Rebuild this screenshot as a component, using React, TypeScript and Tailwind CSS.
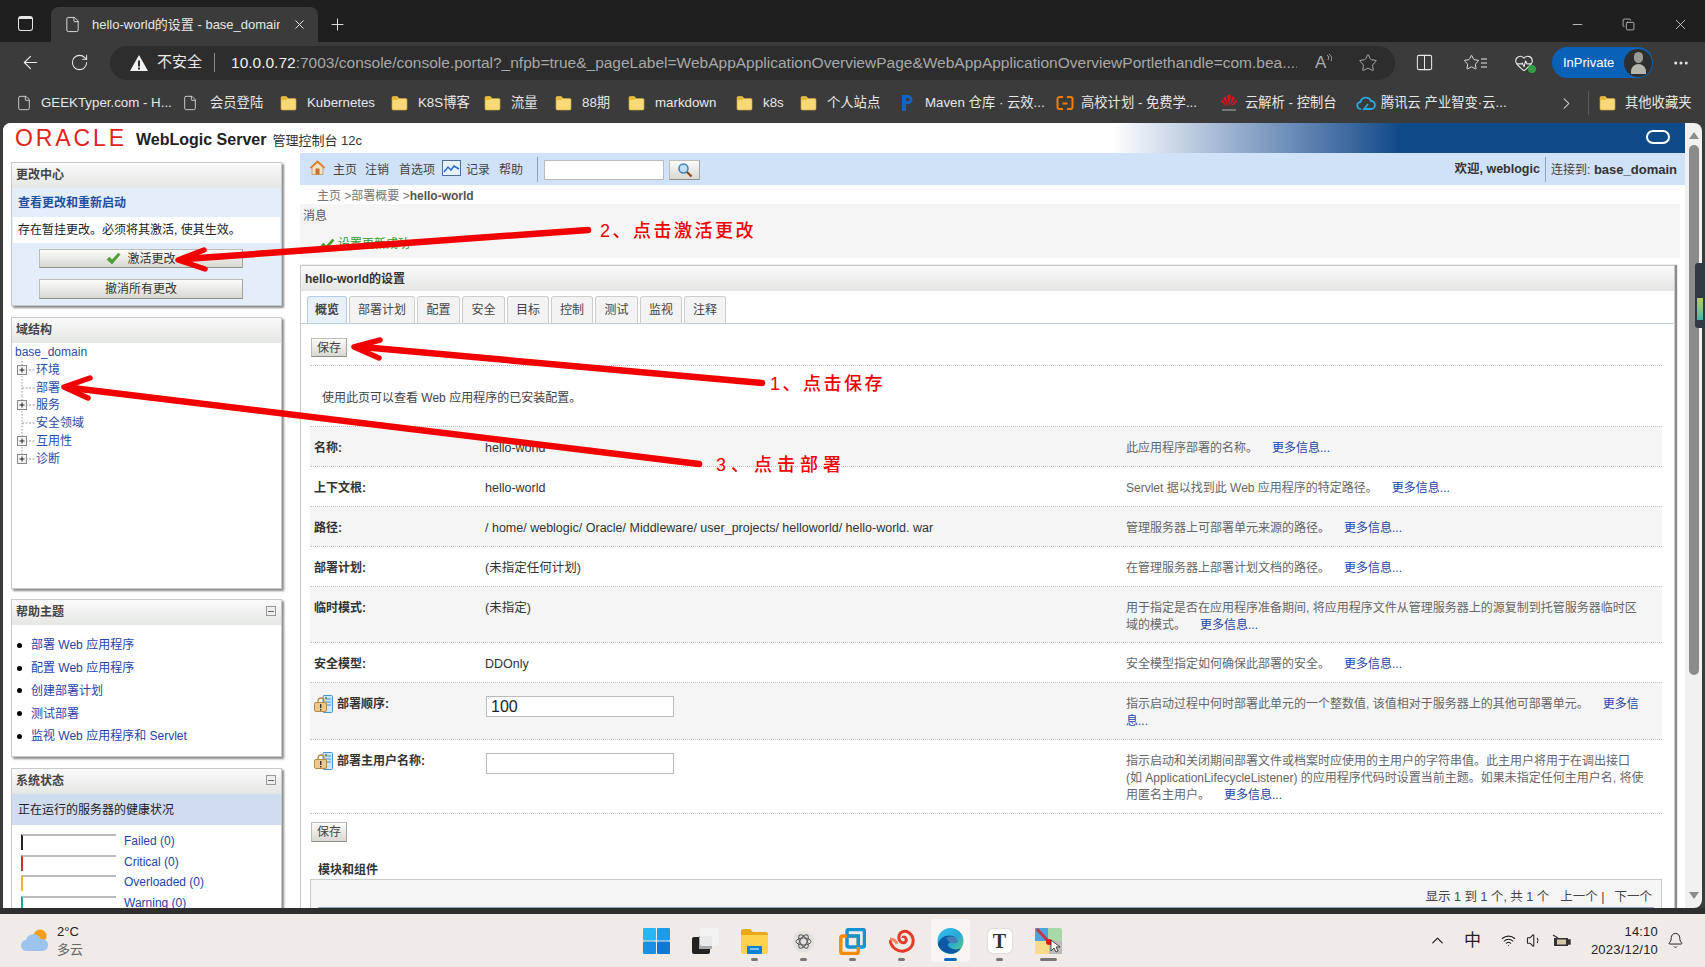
import { FC, ReactNode } from 'react';
import {
  ArrowLeft,
  Bell,
  ChevronRight,
  ChevronUp,
  Columns2,
  Copy,
  Ellipsis,
  File,
  HeartPulse,
  Minus,
  Plus,
  RotateCw,
  Star,
  Volume1,
  Wifi,
  X,
} from 'lucide-react';

const FONT = 'font-["Liberation_Sans","Noto_Sans_CJK_SC",sans-serif]';
const LINK = 'text-[#2444a8]';
const BTN = 'bg-gradient-to-b from-[#fbfbf9] to-[#d9d9d3] border border-[#bdbdb8] border-b-[#8f8f8a] border-r-[#a5a5a0]';

/* ---------- small drawings ---------- */

const FolderIcon: FC = () => (
  <svg width="17" height="16" viewBox="0 0 17 16" className="shrink-0">
    <path d="M1 3c0-1 .6-1.5 1.5-1.5h3.7L8 3.5h6.5c1 0 1.5.5 1.5 1.5v8.500c0 1-.5 1.500-1.500 1.500h-12C1.500 15 1 14.500 1 13.500z" fill="#f8d978" stroke="#c9a33c" strokeWidth=".7" />
    <path d="M1 3c0-1 .6-1.500 1.500-1.500h3.700L8 3.500 6 5H1z" fill="#e8b93e" />
  </svg>
);

const BookmarkFolder: FC = () => (
  <span className="ml-[1px] mr-[10px]">
    <FolderIcon />
  </span>
);

const MavenIcon: FC = () => (
  <svg width="14" height="18" viewBox="0 0 14 18" className="shrink-0">
    <path d="M2 1h6a4.500 4.500 0 0 1 0 9H6v7H2z" fill="#1565c0" />
    <path d="M6 4h2a1.500 1.500 0 0 1 0 3H6z" fill="#3b3b3b" />
  </svg>
);

const BracketIcon: FC = () => (
  <svg width="18" height="16" viewBox="0 0 18 16" className="mr-[3px] shrink-0">
    <path d="M7 2H3.500A2 2 0 0 0 1.500 4v8a2 2 0 0 0 2 2H7M11 2h3.500a2 2 0 0 1 2 2v8a2 2 0 0 1-2 2H11M6.500 8.500h5" fill="none" stroke="#f57c00" strokeWidth="2" />
  </svg>
);

const HuaweiIcon: FC = () => (
  <svg width="18" height="20" viewBox="0 0 18 20" className="shrink-0">
    <g fill="#d8141c">
      <path d="M9 13 7 3c1-1 2-2 2-2s1 1 2 2z" />
      <path d="M8 13 3 5l3-2z" />
      <path d="M10 13l5-8-3-2z" />
      <path d="M7.500 14 1 9l1-3z" />
      <path d="M10.500 14 17 9l-1-3z" />
    </g>
    <rect x="2" y="16" width="14" height="2" fill="#777" />
  </svg>
);

const CloudIcon: FC = () => (
  <svg width="20" height="16" viewBox="0 0 20 16" className="shrink-0" fill="none">
    <path d="M5 14a3.500 3.500 0 0 1-.5-7A5.500 5.500 0 0 1 15 6a4 4 0 0 1 0 8H8l4-5" stroke="#29a9e1" strokeWidth="1.800" />
  </svg>
);

const HomeIcon: FC = () => (
  <svg width="17" height="17" viewBox="0 0 17 17" className="-mt-[5px] shrink-0">
    <path d="M3 8v7.500h11V8L8.500 3z" fill="#f4e2c0" stroke="#b5793a" strokeWidth=".6" />
    <path d="M.8 8.500 8.500 1.200l7.700 7.300-1.300 1L8.500 3.700 2.100 9.500z" fill="#e2792a" />
    <rect x="6.500" y="9.500" width="4" height="6" fill="#c9702c" />
  </svg>
);

const ChartIcon: FC = () => (
  <svg width="19" height="16" viewBox="0 0 19 16" className="-mt-[3px] shrink-0">
    <rect x=".5" y=".5" width="18" height="15" fill="#e8f0fa" stroke="#4a6f9c" />
    <path d="M2 12 6 7l3 3 3-4 5 3" fill="none" stroke="#2b6be0" strokeWidth="1.500" />
  </svg>
);

const SearchIcon: FC = () => (
  <svg width="16" height="16" viewBox="0 0 16 16">
    <circle cx="6.500" cy="6.500" r="4.500" fill="#bfe0f7" stroke="#3f7fb5" strokeWidth="1.500" />
    <path d="m10 10 4.500 4.500" stroke="#8a4a22" strokeWidth="2.200" />
  </svg>
);

const CheckIcon: FC = () => (
  <svg width="15" height="13" viewBox="0 0 15 13" className="shrink-0">
    <path d="M1 7.500 3.500 5l2.500 3L12.500 1 14 2.500 6 12z" fill="#4aa52e" stroke="#2f7d1d" strokeWidth=".5" />
  </svg>
);

const LockDocIcon: FC = () => (
  <svg width="19" height="18" viewBox="0 0 19 18" className="shrink-0">
    <rect x="9" y=".5" width="9.500" height="17" rx="1" fill="#cfe4f6" stroke="#4c92cf" />
    <path d="M11 4h6M11 7h6M11 10h6" stroke="#4c92cf" />
    <rect x="11" y="2" width="2" height="2" fill="#5aa55a" />
    <path d="M4 8V6a3 3 0 0 1 6 0v2" fill="none" stroke="#b98a45" strokeWidth="1.300" />
    <rect x=".5" y="7.500" width="12" height="9" rx="1.500" fill="#efc987" stroke="#b98a45" />
    <rect x="6" y="9" width="1.400" height="4" fill="#333" />
    <rect x="6" y="14" width="1.400" height="1.400" fill="#333" />
  </svg>
);

const TreeConnector: FC<{ box?: boolean; last?: boolean }> = ({ box, last }) => (
  <svg width="21" height="18" viewBox="0 0 21 18" className="shrink-0">
    <path d={last ? 'M7 0v9' : 'M7 0v18'} stroke="#999" strokeDasharray="1.500 1.500" />
    <path d="M7 9h13" stroke="#999" strokeDasharray="2 1.500" />
    {box && (
      <>
        <rect x="2.500" y="4.500" width="9" height="9" fill="#f4f4f4" stroke="#888" />
        <path d="M4.500 9h5M7 6.500v5" stroke="#222" />
      </>
    )}
  </svg>
);

const CollapseBox: FC = () => (
  <span className="-mt-[2px] flex h-[10px] w-[10px] items-center justify-center border border-[#999] bg-[#eee]">
    <span className="h-px w-[6px] bg-[#666]" />
  </span>
);

/* ---------- browser chrome ---------- */

const TabStrip: FC = () => (
  <div className="flex h-[42px] items-end bg-[#1f1f1f] text-[#e6e6e6]">
    <div className="flex h-[35px] w-[51px] items-center justify-center pb-[3px]">
      <span className="h-[15px] w-[15px] rounded-[3px] border border-[#e6e6e6] border-t-[3px]" />
    </div>
    <div className="flex h-[35px] w-[267px] items-center rounded-t-lg bg-[#3b3b3b] pl-[13px]">
      <File size={17} strokeWidth={1.3} className="shrink-0" />
      <span className="ml-[11px] w-[188px] overflow-hidden whitespace-nowrap text-[13px]">hello-world的设置 - base_domain</span>
      <X size={15} strokeWidth={1.6} className="ml-[12px]" />
    </div>
    <div className="flex h-[35px] w-[38px] items-center justify-center">
      <Plus size={19} strokeWidth={1.2} />
    </div>
    <div className="ml-auto flex h-[35px] items-center pr-[16px]">
      <Minus size={15} strokeWidth={1.2} className="mr-[37px]" />
      <Copy size={13} strokeWidth={1.3} className="mr-[37px]" />
      <X size={17} strokeWidth={1.1} />
    </div>
  </div>
);

const Toolbar: FC = () => (
  <div className="flex h-[41px] items-center bg-[#3b3b3b] text-[#e8e8e8]">
    <div className="flex w-[60px] justify-center">
      <ArrowLeft size={21} strokeWidth={1.3} />
    </div>
    <div className="flex w-[39px] justify-center">
      <RotateCw size={19} strokeWidth={1.3} />
    </div>
    <div className="ml-[11px] flex h-[34px] w-[1285px] items-center rounded-[17px] bg-[#2d2d2d] pl-[20px]">
      <svg width="18" height="16" viewBox="0 0 18 16" className="shrink-0">
        <path d="M9 0 18 16H0z" fill="#f2f2f2" />
        <rect x="8" y="5.500" width="2" height="6" fill="#2d2d2d" />
        <rect x="8" y="12.500" width="2" height="2" fill="#2d2d2d" />
      </svg>
      <span className="ml-[9px] text-[15px]">不安全</span>
      <span className="ml-[12px] h-[19px] w-px bg-[#8a8a8a]" />
      <span className="ml-[16px] w-[1066px] overflow-hidden whitespace-nowrap text-[15.500px] text-[#a8a8a8]">
        <span className="text-[#f0f0f0]">10.0.0.72</span>:7003/console/console.portal?_nfpb=true&amp;_pageLabel=WebAppApplicationOverviewPage&amp;WebAppApplicationOverviewPortlethandle=com.bea....
      </span>
      <span className="ml-[18px] text-[17px] text-[#aaa]">A</span>
      <svg width="6" height="10" viewBox="0 0 6 10" className="mb-[8px]" fill="none" stroke="#aaa">
        <path d="M1 1c2 1 2 3 1 5M3 0c3 2 3 5 2 7" />
      </svg>
      <Star size={20} strokeWidth={1.2} className="ml-[26px] text-[#aaa]" />
    </div>
    <Columns2 size={19} strokeWidth={1.3} className="ml-[20px]" />
    <div className="ml-[29px] flex items-center">
      <Star size={17} strokeWidth={1.3} />
      <svg width="7" height="12" viewBox="0 0 7 12" stroke="#e8e8e8">
        <path d="M1 2h6M1 6h6M1 10h6" />
      </svg>
    </div>
    <div className="relative ml-[27px]">
      <HeartPulse size={20} strokeWidth={1.3} />
      <span className="absolute bottom-0 right-[-2px] h-[8px] w-[8px] rounded-full bg-[#2f9e44]" />
    </div>
    <div className="ml-[18px] flex h-[31px] w-[101px] items-center rounded-full bg-[#0a62b8] pl-[11px] text-[13px] text-white">
      InPrivate
      <span className="ml-auto mr-[1px] flex h-[28px] w-[28px] flex-col items-center justify-center gap-[1px] rounded-full bg-[#2e2e2e]">
        <span className="h-[11px] w-[9px] rounded-full bg-[#9a9a94]" />
        <span className="h-[10px] w-[15px] rounded-t-full bg-[#b5b5ad]" />
      </span>
    </div>
    <Ellipsis size={18} className="ml-[19px]" />
  </div>
);

const bookmarks: { icon: ReactNode; label: string; width: string }[] = [
  { icon: <File size={16} strokeWidth={1.2} />, label: 'GEEKTyper.com - H...', width: 'w-[166px]' },
  { icon: <File size={16} strokeWidth={1.2} className="mr-[12px]" />, label: '会员登陆', width: 'w-[97px]' },
  { icon: <BookmarkFolder />, label: 'Kubernetes', width: 'w-[111px]' },
  { icon: <BookmarkFolder />, label: 'K8S博客', width: 'w-[93px]' },
  { icon: <BookmarkFolder />, label: '流量', width: 'w-[71px]' },
  { icon: <BookmarkFolder />, label: '88期', width: 'w-[73px]' },
  { icon: <BookmarkFolder />, label: 'markdown', width: 'w-[108px]' },
  { icon: <BookmarkFolder />, label: 'k8s', width: 'w-[64px]' },
  { icon: <BookmarkFolder />, label: '个人站点', width: 'w-[101px]' },
  { icon: <MavenIcon />, label: 'Maven 仓库 · 云效...', width: 'w-[156px]' },
  { icon: <BracketIcon />, label: '高校计划 - 免费学...', width: 'w-[164px]' },
  { icon: <HuaweiIcon />, label: '云解析 - 控制台', width: 'w-[136px]' },
  { icon: <CloudIcon />, label: '腾讯云 产业智变·云...', width: 'w-[200px]' },
];

const BookmarkBar: FC = () => (
  <div className="flex h-[40px] items-center bg-[#3b3b3b] pl-[16px] text-[13.300px] text-[#e8e8e8]">
    {bookmarks.map((item) => (
      <div key={item.label} className={`${item.width} flex shrink-0 items-center whitespace-nowrap`}>
        <span className="flex min-w-[25px] shrink-0">{item.icon}</span>
        {item.label}
      </div>
    ))}
    <ChevronRight size={19} strokeWidth={1.3} className="ml-[1px]" />
    <span className="ml-[12px] h-[24px] w-px bg-[#5a5a5a]" />
    <span className="ml-[10px] flex items-center gap-[9px] whitespace-nowrap">
      <FolderIcon />
      其他收藏夹
    </span>
  </div>
);

/* ---------- console, left column ---------- */

const Panel: FC<{ title: string; collapse?: boolean; className: string; children: ReactNode }> = ({ title, collapse, className, children }) => (
  <section className={`${className} w-[271px] shrink-0 border border-[#c9c9c9] bg-white shadow-[2px_2px_2px_#8c8c8c]`}>
    <div className="flex h-[25px] items-center justify-between bg-gradient-to-b from-[#fafafa] to-[#e5e7e4] pb-[1px] pl-[4px] pr-[5px] text-[12px] font-bold text-[#444]">
      {title}
      {collapse && <CollapseBox />}
    </div>
    {children}
  </section>
);

const tree = [
  { label: '环境', box: true },
  { label: '部署' },
  { label: '服务', box: true },
  { label: '安全领域' },
  { label: '互用性', box: true },
  { label: '诊断', box: true, last: true },
];

const helpTopics = ['部署 Web 应用程序', '配置 Web 应用程序', '创建部署计划', '测试部署', '监视 Web 应用程序和 Servlet'];

const health = [
  { label: 'Failed (0)', bar: 'border-l-[#222]' },
  { label: 'Critical (0)', bar: 'border-l-[#d32f2f]' },
  { label: 'Overloaded (0)', bar: 'border-l-[#e5b53a]' },
  { label: 'Warning (0)', bar: 'border-l-[#2a9d9d]' },
];

const LeftColumn: FC = () => (
  <aside className="flex w-[297px] shrink-0 flex-col pl-[8px] pt-[9px]">
    <Panel title="更改中心" className="h-[144px] bg-[#e4edfa]">
      <div className="flex h-[29px] items-center bg-[#e4edfa] pl-[6px] text-[12px] font-bold text-[#1f4fa0]">查看更改和重新启动</div>
      <div className="h-[88px] bg-[#e4edfa]">
        <div className="mx-[1px] flex h-[26px] items-center bg-white pl-[5px] text-[12px] text-[#222]">存在暂挂更改。必须将其激活, 使其生效。</div>
        <div className={`${BTN} ml-[27px] mt-[6px] flex h-[19px] w-[204px] items-center justify-center gap-[6px] text-[12px] text-[#333]`}>
          <CheckIcon />
          激活更改
        </div>
        <div className={`${BTN} ml-[27px] mt-[11px] flex h-[20px] w-[204px] items-center justify-center text-[12px] text-[#333]`}>撤消所有更改</div>
      </div>
    </Panel>
    <Panel title="域结构" className="mt-[11px] h-[272px]">
      <div className="pl-[3px] text-[12px] text-[#2b4ba8]">
        <div className="flex h-[18px] items-center">base_domain</div>
        {tree.map((node) => (
          <div key={node.label} className="flex h-[17.750px] items-center">
            <TreeConnector box={node.box} last={node.last} />
            {node.label}
          </div>
        ))}
      </div>
    </Panel>
    <Panel title="帮助主题" collapse className="mt-[10px] h-[158px]">
      <ul className="pl-[5px] pt-[9px] text-[12px]">
        {helpTopics.map((topic) => (
          <li key={topic} className="flex h-[22.750px] items-center">
            <span className="h-[5px] w-[5px] rounded-full bg-black" />
            <span className={`ml-[9px] ${LINK}`}>{topic}</span>
          </li>
        ))}
      </ul>
    </Panel>
    <Panel title="系统状态" collapse className="mt-[11px] h-[180px]">
      <div className="flex h-[31px] items-center bg-[#d0dcef] pl-[6px] text-[12px] text-[#222]">正在运行的服务器的健康状况</div>
      <div className="pl-[9px] pt-[9px]">
        {health.map((row) => (
          <div key={row.label} className="flex h-[20.500px] items-start">
            <span className={`${row.bar} h-[16px] w-[95px] border-l-2 border-t-2 border-t-[#bbb]`} />
            <span className={`ml-[8px] text-[12px] leading-[15px] ${LINK}`}>{row.label}</span>
          </div>
        ))}
      </div>
    </Panel>
  </aside>
);

/* ---------- console, right column ---------- */

const tabs = [
  { name: '概览', width: 'w-[40px]', active: true },
  { name: '部署计划', width: 'w-[66px]' },
  { name: '配置', width: 'w-[43px]' },
  { name: '安全', width: 'w-[43px]' },
  { name: '目标', width: 'w-[42px]' },
  { name: '控制', width: 'w-[42px]' },
  { name: '测试', width: 'w-[43px]' },
  { name: '监视', width: 'w-[42px]' },
  { name: '注释', width: 'w-[42px]' },
];

interface SettingRow {
  label: string;
  value?: string;
  input?: string;
  lock?: boolean;
  desc: string;
  link?: string;
  height: string;
}

const rows: SettingRow[] = [
  { label: '名称:', value: 'hello-world', desc: '此应用程序部署的名称。', height: 'h-[40px]' },
  { label: '上下文根:', value: 'hello-world', desc: 'Servlet 据以找到此 Web 应用程序的特定路径。', height: 'h-[40px]' },
  { label: '路径:', value: '/ home/ weblogic/ Oracle/ Middleware/ user_projects/ helloworld/ hello-world. war', desc: '管理服务器上可部署单元来源的路径。', height: 'h-[40px]' },
  { label: '部署计划:', value: '(未指定任何计划)', desc: '在管理服务器上部署计划文档的路径。', height: 'h-[40px]' },
  { label: '临时模式:', value: '(未指定)', desc: '用于指定是否在应用程序准备期间, 将应用程序文件从管理服务器上的源复制到托管服务器临时区\n域的模式。', height: 'h-[56px]' },
  { label: '安全模型:', value: 'DDOnly', desc: '安全模型指定如何确保此部署的安全。', height: 'h-[40px]' },
  { label: '部署顺序:', input: '100', lock: true, desc: '指示启动过程中何时部署此单元的一个整数值, 该值相对于服务器上的其他可部署单元。', link: '更多信\n息...', height: 'h-[57px]' },
  { label: '部署主用户名称:', input: '', lock: true, desc: '指示启动和关闭期间部署文件或档案时应使用的主用户的字符串值。此主用户将用于在调出接口\n(如 ApplicationLifecycleListener) 的应用程序代码时设置当前主题。如果未指定任何主用户名, 将使\n用匿名主用户。', height: 'h-[74px]' },
];

const TopBar: FC = () => (
  <div className="flex h-[32px] items-center bg-[#d0e2f7] pl-[9px] pr-[8px] pt-[1px] text-[12px] text-[#444]">
    <HomeIcon />
    <span className="ml-[7px]">主页</span>
    <span className="ml-[8px]">注销</span>
    <span className="ml-[10px]">首选项</span>
    <span className="ml-[7px]">
      <ChartIcon />
    </span>
    <span className="ml-[5px]">记录</span>
    <span className="ml-[9px]">帮助</span>
    <span className="ml-[14px] h-[25px] w-px bg-[#8ea3b8]" />
    <input readOnly className="ml-[6px] h-[20px] w-[120px] border border-[#bbb] bg-white" />
    <span className={`${BTN} ml-[5px] flex h-[20px] w-[31px] items-center justify-center`}>
      <SearchIcon />
    </span>
    <span className="ml-auto text-[12.500px] font-bold text-[#333]">欢迎, weblogic</span>
    <span className="mx-[5px] h-[25px] w-px bg-[#8ea3b8]" />
    <span className="text-[13px] text-[#444]">
      <span className="text-[12px]">连接到:</span> <b className="text-[#333]">base_domain</b>
    </span>
  </div>
);

const SettingsRow: FC<{ row: SettingRow; index: number }> = ({ row, index }) => (
  <div className={`${row.height} ${index % 2 === 0 ? 'bg-[#f5f5f5]' : 'bg-white'} flex border-t border-dotted border-[#c4c4c4] pt-[13px] text-[12px] leading-[17px]`}>
    <div className="flex w-[175px] shrink-0 items-start pl-[4px] font-bold text-[#333]">
      {row.lock && (
        <span className="-mt-[1px] mr-[4px]">
          <LockDocIcon />
        </span>
      )}
      {row.label}
    </div>
    <div className="w-[641px] shrink-0 text-[12.500px] text-[#333]">
      {row.value}
      {row.input !== undefined && (
        <input
          readOnly
          value={row.input}
          className="ml-[1px] block h-[21px] w-[188px] border border-[#bbb] bg-white pl-[4px] text-[16px] text-[#222]"
        />
      )}
    </div>
    <div className="w-[532px] shrink-0 whitespace-pre-line text-[#666]">
      {row.desc}
      <a className={`ml-[14px] ${LINK}`}>{row.link ?? '更多信息...'}</a>
    </div>
  </div>
);

const RightColumn: FC = () => (
  <div className="w-[1385px] shrink-0">
    <TopBar />
    <div className="flex h-[19px] items-center pl-[17px] pt-[2px] text-[12px] text-[#777]">
      主页 &gt;部署概要 &gt;<b className="text-[#555]">hello-world</b>
    </div>
    <div className="mr-[5px] h-[54px] bg-[#f5f5f5] pl-[3px] pt-[3px] text-[12px] text-[#555]">
      消息
      <div className="ml-[17px] mt-[10px] flex items-center gap-[3px] text-[#2e9a2e]">
        <CheckIcon />
        设置更新成功
      </div>
    </div>
    <section className="ml-0 mt-[7px] h-[700px] w-[1375px] border border-[#c9c9c9] shadow-[2px_0_1px_#8c8c8c]">
      <div className="flex h-[25px] items-center bg-gradient-to-b from-[#fafafa] to-[#e5e7e4] pl-[4px] text-[12px] font-bold text-[#333]">hello-world的设置</div>
      <div className="flex h-[33px] items-end gap-[2px] border-b border-[#b9cfe2] pl-[6px] text-[12px] text-[#444]">
        {tabs.map((tab) => (
          <div
            key={tab.name}
            className={`${tab.width} flex h-[27px] items-center justify-center rounded-t-[3px] border border-b-0 ${
              tab.active ? 'border-[#b4cce4] bg-[#e9f0f8] font-bold' : 'border-[#cdcdcd] bg-[#f3f3f3]'
            }`}
          >
            {tab.name}
          </div>
        ))}
      </div>
      <div className="pl-[9px] pr-[12px]">
        <div className="mt-[14px] pl-[1px]">
          <div className={`${BTN} flex h-[19px] w-[36px] items-center justify-center text-[12px] text-[#444]`}>保存</div>
        </div>
        <div className="mt-[8px] h-[61px] border-t border-dotted border-[#c4c4c4] pl-[12px] pt-[24px] text-[12px] leading-[17px] text-[#444]">
          使用此页可以查看 Web 应用程序的已安装配置。
        </div>
        {rows.map((row, index) => (
          <SettingsRow key={row.label} row={row} index={index} />
        ))}
        <div className="border-t border-dotted border-[#c4c4c4] pl-[1px] pt-[8px]">
          <div className={`${BTN} flex h-[20px] w-[36px] items-center justify-center text-[12px] text-[#444]`}>保存</div>
        </div>
        <div className="mt-[20px] pl-[8px] text-[12px] font-bold leading-[17px] text-[#333]">模块和组件</div>
        <div className="flex h-[60px] flex-col border border-[#ccc] bg-[#f5f5f5] px-[7px] pt-[9px] text-[12.500px] leading-[17px] text-[#444]">
          <div className="flex justify-end pr-[2px]">
            显示 1 到 1 个, 共 1 个<span className="ml-[11px]">上一个 |</span>
            <span className="ml-[10px]">下一个</span>
          </div>
          <div className="mt-[1px] h-[4px] border-t border-[#8fa8c4] bg-[#dfe7f1]" />
        </div>
      </div>
    </section>
  </div>
);

const Scrollbar: FC = () => (
  <div className="flex w-[17px] flex-col items-center rounded-r-lg bg-[#f1f1f1] pt-[9px]">
    <span className="h-0 w-0 border-x-[5px] border-b-[7px] border-x-transparent border-b-[#8b8b8b]" />
    <span className="mt-[6px] h-[530px] w-[10px] rounded-full bg-[#8b8b8b]" />
    <span className="mt-auto mb-[9px] h-0 w-0 border-x-[5px] border-t-[7px] border-x-transparent border-t-[#8b8b8b]" />
  </div>
);

/* ---------- taskbar ---------- */

const taskbarApps: { icon: ReactNode; dot?: string; active?: boolean }[] = [
  {
    icon: (
      <svg width="27" height="26" viewBox="0 0 27 26">
        <rect x="0" y="0" width="13" height="12.500" rx="1" fill="#29b6f6" />
        <rect x="14" y="0" width="13" height="12.500" rx="1" fill="#1e9be8" />
        <rect x="0" y="13.500" width="13" height="12.500" rx="1" fill="#1a8fe3" />
        <rect x="14" y="13.500" width="13" height="12.500" rx="1" fill="#0f78d4" />
      </svg>
    ),
  },
  {
    icon: (
      <svg width="27" height="26" viewBox="0 0 27 26">
        <rect x="0" y="9" width="18" height="17" rx="2" fill="#222" />
        <rect x="7" y="8" width="13" height="13" fill="#aaa" />
        <rect x="8" y="0" width="19" height="18" rx="2" fill="#f5f5f5" fillOpacity=".85" />
      </svg>
    ),
  },
  {
    dot: 'w-[7px] bg-[#777]',
    icon: (
      <svg width="27" height="25" viewBox="0 0 27 25">
        <path d="M0 2c0-1 1-2 2-2h7l3 3h13c1 0 2 1 2 2v4H0z" fill="#e8a818" />
        <path d="M0 6h27v17c0 1-1 2-2 2H2c-1 0-2-1-2-2z" fill="#fcd34d" />
        <rect x="6" y="17" width="15" height="8" rx="1" fill="#0f7fd6" />
        <rect x="9" y="19" width="9" height="2" fill="#7cc4f5" />
      </svg>
    ),
  },
  {
    dot: 'w-[7px] bg-[#777]',
    icon: (
      <svg width="23" height="23" viewBox="0 0 23 23" fill="none">
        <circle cx="11.500" cy="11.500" r="11" fill="#e4e2df" />
        <g stroke="#555" strokeWidth="1">
          <ellipse cx="11.500" cy="11.500" rx="7.500" ry="3.500" />
          <ellipse cx="11.500" cy="11.500" rx="7.500" ry="3.500" transform="rotate(60 11.500 11.500)" />
          <ellipse cx="11.500" cy="11.500" rx="7.500" ry="3.500" transform="rotate(120 11.500 11.500)" />
        </g>
      </svg>
    ),
  },
  {
    dot: 'w-[7px] bg-[#777]',
    icon: (
      <svg width="27" height="27" viewBox="0 0 27 27" fill="none">
        <rect x="8" y="1.500" width="17.500" height="17.500" rx="2" stroke="#1293d2" strokeWidth="3.500" />
        <rect x="1.800" y="8" width="17.500" height="17.500" rx="2" stroke="#f58a0b" strokeWidth="3.500" />
        <path d="M8 8h11.300v11" stroke="#1293d2" strokeWidth="3.500" />
      </svg>
    ),
  },
  {
    dot: 'w-[7px] bg-[#777]',
    icon: (
      <svg width="26" height="26" viewBox="0 0 26 26" fill="none">
        <path d="M1 12c1 8 8 12 14 11 6-1 10-6 9-12S17 2 13 4s-4 8-1 10 6 0 5-3-3-2-3-1" stroke="#e8392b" strokeWidth="3" />
        <path d="M1 11c4 0 6 2 7 5" stroke="#f08a5d" strokeWidth="3" />
      </svg>
    ),
  },
  {
    active: true,
    dot: 'w-[13px] bg-[#0f6cbd]',
    icon: (
      <svg width="27" height="26" viewBox="0 0 27 26">
        <defs>
          <linearGradient id="edge" x1="0" y1="0" x2="1" y2="1">
            <stop offset="0" stopColor="#35c1f1" />
            <stop offset=".55" stopColor="#27a8d8" />
            <stop offset="1" stopColor="#66d36e" />
          </linearGradient>
        </defs>
        <circle cx="13.500" cy="13" r="13" fill="url(#edge)" />
        <path d="M1 16C3 8 13 5 19 10c2 2 2 5 0 5h-6c-2 0-3 2-1 4 3 3 9 3 12 1-3 5-9 7-14 5C5 23 1 20 1 16z" fill="#0c59a4" />
        <path d="M13 15h6c2 0 2-3 0-5-3-2-7-2-10 0 1 2 3 3 4 5z" fill="#f0ebe6" fillOpacity=".25" />
      </svg>
    ),
  },
  {
    dot: 'w-[7px] bg-[#777]',
    icon: (
      <span className="flex h-[24px] w-[24px] items-center justify-center rounded-[5px] bg-white font-['Liberation_Serif',serif] text-[20px] font-bold text-[#333] shadow-[0_0_2px_#bbb]">T</span>
    ),
  },
  {
    dot: 'w-[17px] bg-[#777]',
    icon: (
      <span className="relative block h-[26px] w-[27px]">
        <svg width="27" height="26" viewBox="0 0 27 26">
          <rect width="27" height="26" rx="2" fill="#a8d8a8" />
          <path d="M0 0h13v13H0z" fill="#4fa3dc" />
          <path d="M0 13h14v13H0z" fill="#f7dd8a" />
          <path d="M14 13h13v13H14z" fill="#bbb" />
          <path d="m2 1 10 11" stroke="#c4344f" strokeWidth="3" />
          <circle cx="14" cy="14" r="3" fill="#e11" />
          <path d="M16 12v11l3-3 2 4 2-1-2-4h4z" fill="#fff" stroke="#222" strokeWidth=".8" />
        </svg>
      </span>
    ),
  },
];

const Taskbar: FC = () => (
  <div className="flex h-[53px] items-center bg-[#f0ebe6] text-[#222]">
    <div className="flex w-[632px] shrink-0 items-center pl-[21px]">
      <svg width="28" height="23" viewBox="0 0 28 23">
        <circle cx="19" cy="7" r="6.500" fill="#f59e1b" />
        <path d="M6 22a5.500 5.500 0 0 1-1-11A8 8 0 0 1 20 10a6 6 0 0 1 2 12z" fill="#9cc4ee" />
      </svg>
      <div className="ml-[8px] text-[13px] leading-[18px]">
        <div>2°C</div>
        <div className="text-[#666]">多云</div>
      </div>
    </div>
    <div className="flex h-[53px]">
      {taskbarApps.map((app, index) => (
        <div key={index} className="flex w-[49px] flex-col items-center pt-[5px]">
          <div className={`flex h-[43px] w-[39px] flex-col items-center justify-between rounded-[4px] pb-[1px] pt-[9px] ${app.active ? 'bg-[#f8f5f2]' : ''}`}>
            <div className="flex h-[26px] items-center">{app.icon}</div>
            {app.dot && <span className={`${app.dot} h-[3px] rounded-full`} />}
          </div>
        </div>
      ))}
    </div>
    <div className="ml-auto flex items-center pr-[21px]">
      <ChevronUp size={19} strokeWidth={1.6} />
      <span className="ml-[17px] text-[17px]">中</span>
      <Wifi size={15} strokeWidth={1.7} className="ml-[20px]" />
      <Volume1 size={17} strokeWidth={1.5} className="ml-[10px]" />
      <svg width="19" height="14" viewBox="0 0 19 14" className="ml-[9px]">
        <path d="M2 4h14v8H2z" fill="#333" />
        <path d="M16 6h2v4h-2zM1 1l5 3" stroke="#333" fill="#333" strokeWidth="1.400" />
        <rect x="5" y="5.500" width="9" height="5" fill="#cfc9a8" />
      </svg>
      <div className="ml-[20px] text-right text-[13px] leading-[18px] tracking-[.2px]">
        <div>14:10</div>
        <div>2023/12/10</div>
      </div>
      <Bell size={17} strokeWidth={1.4} className="ml-[9px]" />
    </div>
  </div>
);

/* ---------- annotations on top of the screenshot ---------- */

const Annotations: FC = () => (
  <>
    <svg width="1705" height="967" viewBox="0 0 1705 967" className="pointer-events-none absolute left-0 top-0" fill="none" stroke="#f20000" strokeLinecap="round" strokeLinejoin="round">
      <path d="M588 230 185 259" strokeWidth="6.500" />
      <path d="M204 250 178 260l27 9" strokeWidth="5.500" />
      <path d="M762 383 362 347" strokeWidth="6.500" />
      <path d="M380 340 354 347l25 11" strokeWidth="5.500" />
      <path d="M699 464 72 388" strokeWidth="6.500" />
      <path d="M90 378 64 387l24 11" strokeWidth="5.500" />
    </svg>
    <span className="absolute left-[600px] top-[218px] text-[18px] font-medium tracking-[2.500px] text-[#f00000]">2、点击激活更改</span>
    <span className="absolute left-[770px] top-[371px] text-[18px] font-medium tracking-[2.500px] text-[#f00000]">1、点击保存</span>
    <span className="absolute left-[716px] top-[452px] text-[18px] font-medium tracking-[5px] text-[#f00000]">3、点击部署</span>
    <div className="absolute left-[1695px] top-[263px] flex h-[65px] w-[10px] flex-col justify-end rounded-l-[3px] bg-[#2f3a42] pb-[8px]">
      <span className="ml-[2px] h-[22px] w-[6px] bg-gradient-to-b from-[#b5c95a] to-[#3fb8a5]" />
    </div>
  </>
);

export default function App() {
  return (
    <div className={`${FONT} relative flex h-[967px] w-[1705px] flex-col overflow-hidden bg-[#3b3b3b]`}>
      <TabStrip />
      <Toolbar />
      <BookmarkBar />
      <div className="flex h-[785px] pl-[3px] pr-[3px]">
        <main className="h-full w-[1682px] overflow-hidden rounded-tl-lg bg-white">
          <header className="flex h-[30px] items-center bg-gradient-to-r from-white from-[66%] to-[#0f4a89] to-[83%] pl-[12px] pr-[15px] pt-[3px]">
            <span className="-mt-[3px] w-[112px] text-[23px] leading-none tracking-[2.900px] text-[#e2231a]">ORACLE</span>
            <span className="ml-[9px] text-[16px] font-bold text-[#222]">WebLogic Server</span>
            <span className="ml-[6px] pt-[2px] text-[13px] text-[#333]">管理控制台 12c</span>
            <span className="-mt-[5px] ml-auto h-[14px] w-[24px] rounded-full border-2 border-white" />
          </header>
          <div className="flex">
            <LeftColumn />
            <RightColumn />
          </div>
        </main>
        <Scrollbar />
      </div>
      <div className="h-[6px] bg-[#2f2f2f]" />
      <Taskbar />
      <Annotations />
    </div>
  );
}
